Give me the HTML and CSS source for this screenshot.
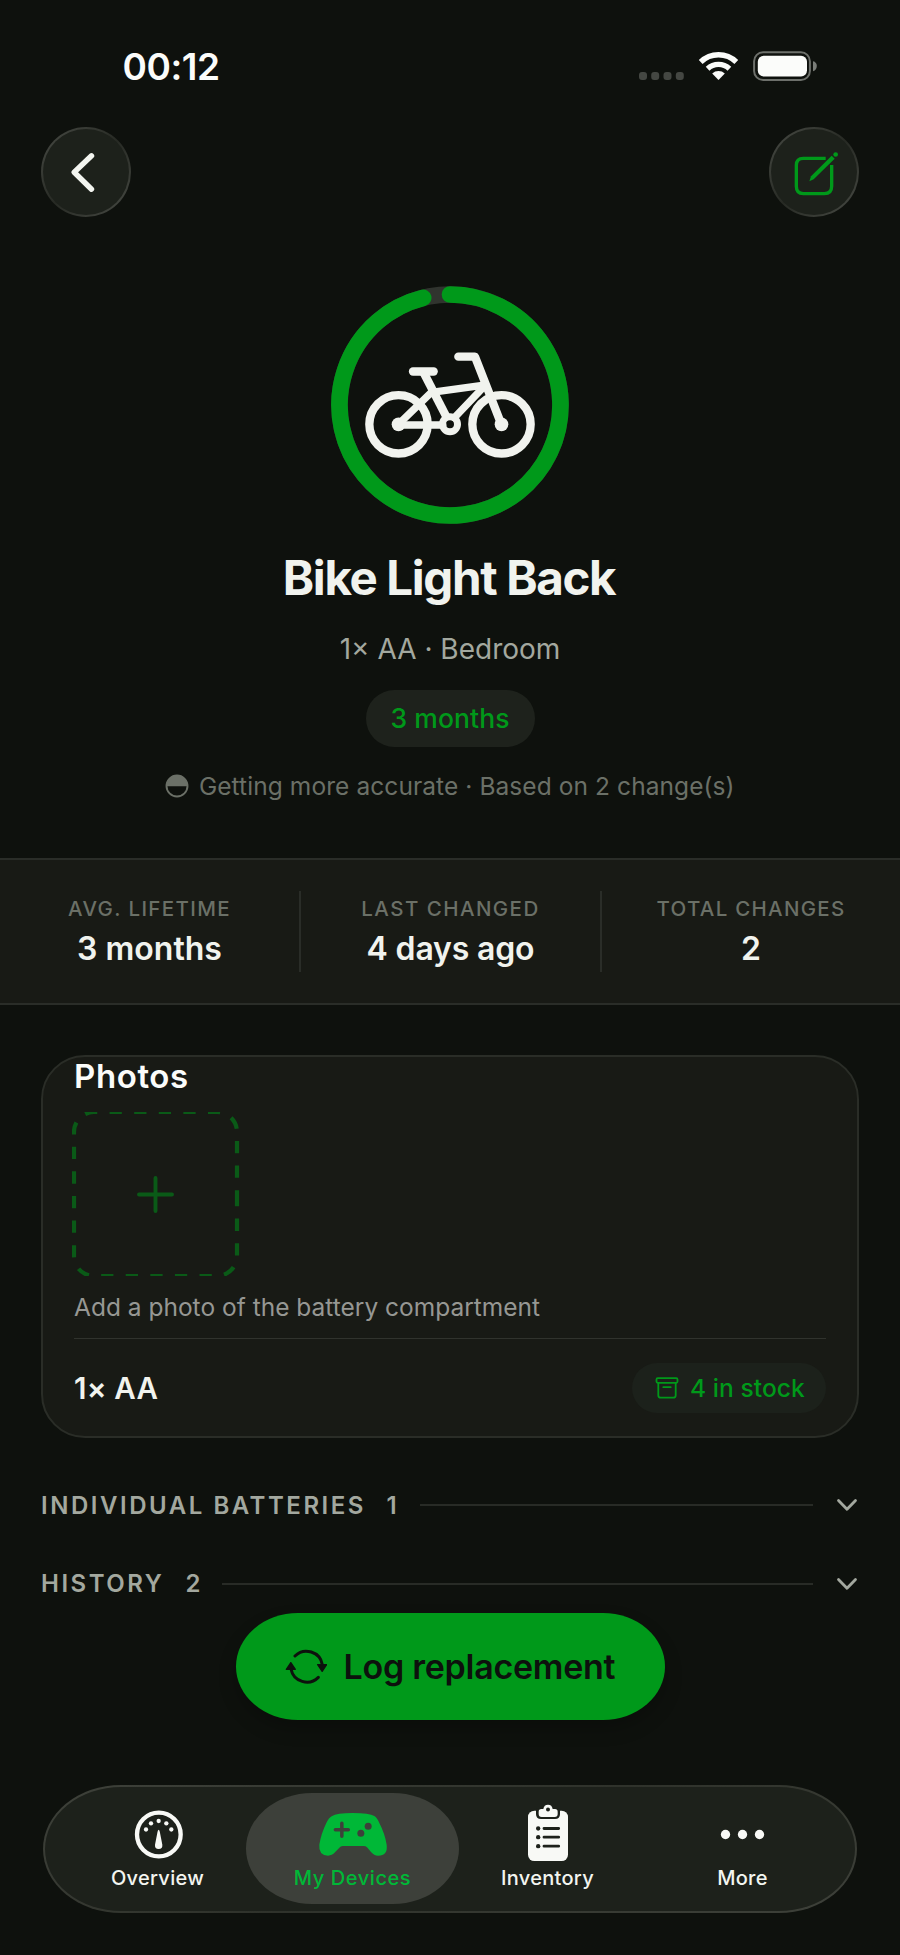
FILE: index.html
```html
<!DOCTYPE html>
<html lang="en">
<head>
<meta charset="utf-8">
<title>Bike Light Back</title>
<link rel="stylesheet" href="styles.css">
</head>
<body>
<div class="screen">
  <header class="status">
    <span class="clock">00:12</span>
    <svg class="status-icons" width="180" height="32" viewBox="0 0 180 32">
      <g fill="#444742"><rect x="0" y="22" width="8" height="8" rx="3"/><rect x="12.2" y="22" width="8" height="8" rx="3"/><rect x="24.5" y="22" width="8" height="8" rx="3"/><rect x="36.8" y="22" width="8" height="8" rx="3"/></g>
      <g fill="none" stroke="#fbfcfa" stroke-width="5.4"><path d="M61.7 12 A25.5 25.5 0 0 1 97.3 12"/><path d="M68.6 18.7 A16 16 0 0 1 90.4 18.7"/></g>
      <path d="M73.2 23.6 A9.2 9.2 0 0 1 85.8 23.6 L79.5 30Z" fill="#fbfcfa"/>
      <rect x="115.1" y="2.2" width="55.8" height="27.8" rx="9" fill="none" stroke="#6d706b" stroke-width="2"/>
      <rect x="118.8" y="5.8" width="49.2" height="20.6" rx="6" fill="#fbfcfa"/>
      <path d="M174 11.2 Q177.8 12 177.8 16.1 Q177.8 20.2 174 21.2Z" fill="#7a7d78"/>
    </svg>
  </header>

  <nav class="toolbar">
    <button class="round" aria-label="Back">
      <svg width="86" height="86" viewBox="2 2 86 86" fill="none" stroke="#f3f5f0" stroke-width="5.4" stroke-linecap="round" stroke-linejoin="round"><path d="M50.5 28.8 L33.2 45.3 L50.5 62.2"/></svg>
    </button>
    <button class="round" aria-label="Edit">
      <svg width="86" height="86" viewBox="6 6 258 258" fill="none" stroke="#00991a"><path d="M170 94 H103 Q82 94 82 115 V178 Q82 200 103 200 H166 Q188 200 188 178 V114" stroke-width="10"/><path d="M188 86 L197 95 L134 157 L121 163 L126 148 Z" fill="#00991a" stroke="none"/><circle cx="200" cy="82.500" r="7" fill="#00991a" stroke="none"/></svg>
    </button>
  </nav>

  <section class="hero">
    <svg class="ring" width="280" height="270" viewBox="0 0 840 810" fill="none">
      <circle cx="420" cy="405" r="331.500" stroke="#30342e" stroke-width="50"/>
      <path d="M420 73.500 A331.500 331.500 0 1 1 339.500 83.400" stroke="#00991a" stroke-width="50" stroke-linecap="round"/>
      <g stroke="#f1f3ee" stroke-width="25" stroke-linecap="round" stroke-linejoin="round">
        <circle cx="265.500" cy="463" r="87.500"/>
        <circle cx="574.500" cy="463" r="87.500"/>
        <circle cx="420" cy="463" r="22.500" stroke-width="21"/>
        <path d="M309 304.500 H371"/>
        <path d="M340 306 L409 440" stroke-linecap="butt"/>
        <path d="M445 260 H495 L574 463"/>
        <path d="M265 463 L364 367 L517 346" stroke-width="22"/>
        <path d="M523 349 L433 443" stroke-width="22"/>
        <path d="M265 465 H398" stroke-width="23"/>
      </g>
      <circle cx="265.500" cy="463" r="20.500" fill="#f1f3ee"/>
      <circle cx="574.500" cy="463" r="20.500" fill="#f1f3ee"/>
    </svg>
    <h1 class="title">Bike Light Back</h1>
    <p class="subtitle">1× AA · Bedroom</p>
    <span class="pill">3 months</span>
    <p class="accuracy">
      <svg width="24" height="24" viewBox="0 0 24 24"><circle cx="12" cy="12" r="10.500" fill="none" stroke="#6b7067" stroke-width="1.900"/><path d="M1 12.300 A11 11 0 0 1 23 12.300Z" fill="#6b7067"/></svg>
      <span>Getting more accurate · Based on 2 change(s)</span>
    </p>
  </section>

  <section class="stats">
    <div class="stat"><span class="stat-label avg">AVG. LIFETIME</span><span class="stat-value">3 months</span></div>
    <div class="stat"><span class="stat-label">LAST CHANGED</span><span class="stat-value ago">4 days ago</span></div>
    <div class="stat"><span class="stat-label total">TOTAL CHANGES</span><span class="stat-value">2</span></div>
  </section>

  <section class="card">
    <h2 class="card-title">Photos</h2>
    <svg class="add" width="168" height="164" viewBox="0 0 168 164" fill="none" stroke="#0a5a17" stroke-width="4.200">
      <path d="M165 82 V144 A20 20 0 0 1 145 164 H22 A20 20 0 0 1 2 144 V20 A20 20 0 0 1 22 0 H145 A20 20 0 0 1 165 20 Z" stroke-dasharray="12.300 12.300"/>
      <path d="M67 82.500 H100 M83.500 66 V99" stroke-width="3.900" stroke-linecap="round"/>
    </svg>
    <p class="hint">Add a photo of the battery compartment</p>
    <div class="battery-row">
      <span class="battery">1× AA</span>
      <span class="stock">
        <svg width="24" height="24" viewBox="0 0 24 24" fill="none" stroke="#00991a" stroke-width="1.800" stroke-linecap="round" stroke-linejoin="round"><rect x="1.500" y="2.200" width="21" height="4.600" rx="1.200"/><path d="M3.300 6.800 V19.200 Q3.300 21.700 5.800 21.700 H18.200 Q20.700 21.700 20.700 19.200 V6.800 M8.300 11.200 H15.700"/></svg>
        <span>4 in stock</span>
      </span>
    </div>
  </section>

  <section class="groups">
    <div class="group"><span class="group-name">INDIVIDUAL BATTERIES</span><span class="count">1</span><i class="rule"></i><svg width="22" height="14" viewBox="0 0 22 14" fill="none" stroke="#a3a89f" stroke-width="2.800" stroke-linecap="round" stroke-linejoin="round"><path d="M2.500 2.500 L11 11.300 L19.500 2.500"/></svg></div>
    <div class="group"><span class="group-name history">HISTORY</span><span class="count two">2</span><i class="rule"></i><svg width="22" height="14" viewBox="0 0 22 14" fill="none" stroke="#a3a89f" stroke-width="2.800" stroke-linecap="round" stroke-linejoin="round"><path d="M2.500 2.500 L11 11.300 L19.500 2.500"/></svg></div>
  </section>

  <button class="log">
    <svg width="42" height="36" viewBox="12 147 126 108"><g fill="none" stroke="#0d110d" stroke-width="9" stroke-linecap="round"><path d="M42 168 A48.500 48.500 0 0 1 124 194"/><path d="M112 232 A48.500 48.500 0 0 1 30 207"/></g><g fill="#0d110d" stroke="#0d110d" stroke-width="4" stroke-linejoin="round"><path d="M110 194 H137 L123.500 214Z"/><path d="M16 208 H43 L29.500 188Z"/></g></svg>
    <span>Log replacement</span>
  </button>

  <nav class="tabs">
    <a class="tab">
      <svg width="70" height="66" viewBox="309 123 210 198" fill="#f8f9f6"><circle cx="416.500" cy="223.500" r="65.500" fill="none" stroke="#f8f9f6" stroke-width="13"/><circle cx="378" cy="208.500" r="6.500"/><circle cx="393" cy="190" r="6.500"/><circle cx="416" cy="183" r="6.500"/><circle cx="439" cy="190" r="6.500"/><circle cx="454" cy="208.500" r="6.500"/><path d="M416 209 Q418.500 210 419.500 216 L427 254 Q428 267 416 267 Q404 267 405 254 L412.500 216 Q413.500 210 416 209Z"/></svg>
      <span class="tab-label">Overview</span>
    </a>
    <a class="tab active">
      <svg width="70" height="66" viewBox="894 123 210 198"><path d="M935 169 Q950 159 998 159 Q1048 159 1063 168 Q1071 173 1078 189 Q1095 222 1100 254 Q1104 287 1074 287 Q1062 287 1053 276 L1041 262 Q1037 258 1031 258 H968 Q962 258 958 263 L945 277 Q936 287 924 287 Q895 285 898 254 Q903 222 919 189 Q927 173 935 169Z" fill="#00b837"/><path d="M946 209.500 H985 M965.500 190 V229" stroke="#3d403a" stroke-width="10.500" stroke-linecap="round"/><circle cx="1044.500" cy="198.500" r="10.500" fill="#3d403a"/><circle cx="1022.500" cy="220" r="10.500" fill="#3d403a"/></svg>
      <span class="tab-label devices">My Devices</span>
    </a>
    <a class="tab">
      <svg width="70" height="66" viewBox="189 123 210 198"><rect x="234" y="152" width="120" height="151" rx="19" fill="#f8f9f6"/><path d="M258 145 H330 V162 Q330 177 315 177 H273 Q258 177 258 162Z" fill="#1d211b"/><path d="M274 147 H280 Q282 134 294 134 Q306 134 308 147 H315 Q323 147 323 155 V162 Q323 171 314 171 H275 Q266 171 266 162 V155 Q266 147 274 147Z" fill="#f8f9f6"/><g fill="#1d211b"><circle cx="294" cy="148.500" r="6"/><circle cx="264.500" cy="205.500" r="6.500"/><circle cx="264.500" cy="231.500" r="6.500"/><circle cx="264.500" cy="258.500" r="6.500"/></g><path d="M282 205.500 H326 M282 231.500 H326 M282 258.500 H326" stroke="#1d211b" stroke-width="8.500" stroke-linecap="round"/></svg>
      <span class="tab-label">Inventory</span>
    </a>
    <a class="tab">
      <svg width="70" height="66" viewBox="774 123 210 198" fill="#f8f9f6"><circle cx="826.500" cy="223.500" r="14"/><circle cx="877.500" cy="223.500" r="14"/><circle cx="928.500" cy="223.500" r="14"/></svg>
      <span class="tab-label">More</span>
    </a>
  </nav>
</div>
</body>
</html>
```
FILE: styles.css
```css
* { box-sizing: border-box; }
body { margin: 0; background: #0e110d; }
h1, h2, p { margin: 0; }
button { padding: 0; border: 0; font: inherit; }
svg { display: block; flex: none; }

.screen {
  width: 900px;
  height: 1955px;
  overflow: hidden;
  display: flex;
  flex-direction: column;
  background: #0e110d;
  color: #f1f3ee;
  font-family: Inter, "Liberation Sans", sans-serif;
  white-space: nowrap;
}

.status {
  height: 127px;
  padding: 6px 81px 0 122.5px;
  display: flex;
  align-items: center;
  justify-content: space-between;
}
.status-icons { margin-bottom: 2px; }
.clock { font-size: 37px; font-weight: 600; line-height: 44px; letter-spacing: -0.44px; color: #fbfcfa; }

.toolbar { display: flex; justify-content: space-between; padding: 0 41px; height: 90px; }
.round {
  width: 90px;
  height: 90px;
  border-radius: 50%;
  border: 2px solid transparent;
  background:
    linear-gradient(#1d211b, #1d211b) padding-box,
    linear-gradient(135deg, #42453f 10%, #272a24 50%, #42453f 90%) border-box;
  display: grid;
  place-items: center;
}

.hero { margin-top: 53px; display: flex; flex-direction: column; align-items: center; }
.title { margin-left: -2px; font-size: 47.5px; font-weight: 700; line-height: 76px; letter-spacing: -1.36px; }
.subtitle { font-size: 28px; line-height: 66px; color: #a3a89f; }
.pill {
  margin-top: 8px;
  width: 169px;
  height: 57px;
  border-radius: 29px;
  background: #1e221c;
  color: #00991a;
  font-size: 26.5px;
  font-weight: 500;
  line-height: 57px;
  letter-spacing: 0.1px;
  text-align: center;
}
.accuracy {
  display: flex;
  align-items: center;
  gap: 9.5px;
  height: 78px;
  font-size: 24.5px;
  letter-spacing: 0.08px;
  color: #6b7067;
}

.stats {
  margin-top: 33px;
  height: 147px;
  padding: 31px 0;
  display: grid;
  grid-template-columns: 299px 301px 300px;
  background: #181a15;
  border: solid #2a2d28;
  border-width: 2px 0;
}
.stat { display: flex; flex-direction: column; align-items: center; padding-top: 2.5px; }
.stat + .stat { border-left: 2px solid #2a2d28; }
.stat-label { font-size: 20.5px; font-weight: 500; line-height: 30px; letter-spacing: 1.45px; color: #6b7067; }
.stat-label.avg { letter-spacing: 1.36px; }
.stat-label.total { letter-spacing: 1.28px; }
.stat-value { margin-top: 3.5px; font-size: 32px; font-weight: 600; line-height: 44px; }
.stat-value.ago { letter-spacing: -0.17px; }

.card {
  margin: 50px 41px 0;
  height: 383px;
  padding: 0 31px 0 29px;
  border: 2px solid #2a2d27;
  border-radius: 44px;
  background: #181a15;
}
.card-title { margin-left: 2px; font-size: 33px; font-weight: 600; line-height: 38px; letter-spacing: 0.6px; color: #fbfcfa; }
.add { margin-top: 17px; overflow: hidden; }
.hint { margin: 11px 0 0 2px; font-size: 24.5px; line-height: 40px; color: #969793; }
.battery-row {
  margin: 11px 0 0 2px;
  height: 98px;
  border-top: 1px solid #30332d;
  display: flex;
  align-items: center;
  justify-content: space-between;
}
.battery { font-size: 29.5px; font-weight: 600; letter-spacing: 0.2px; }
.stock {
  width: 194px;
  height: 50px;
  padding-left: 23px;
  border-radius: 25px;
  background: #1c211b;
  display: flex;
  align-items: center;
  gap: 11px;
  color: #00991a;
  font-size: 24.5px;
  font-weight: 500;
  letter-spacing: 0.08px;
}

.groups { margin-top: 28px; padding: 0 42.5px 0 41px; }
.group { display: flex; align-items: center; height: 78.5px; color: #a3a89f; font-size: 24px; font-weight: 600; }
.group-name { letter-spacing: 2.53px; }
.count { width: 33.5px; margin-left: 20.5px; }
.history + .count { margin-left: 21px; width: 36.5px; }
.rule { flex: 1; height: 2px; margin-right: 22.5px; background: #282b26; }

.log {
  align-self: center;
  margin-top: -10px;
  width: 429px;
  height: 107px;
  flex: none;
  border-radius: 62px / 53.5px;
  background: #00991a;
  box-shadow: 0 9px 18px rgba(0, 0, 0, 0.22);
  display: flex;
  align-items: center;
  padding-left: 49px;
  gap: 17px;
  color: #0d110d;
  font-size: 34px;
  font-weight: 600;
  letter-spacing: -0.26px;
}

.tabs {
  margin: 65px auto 0;
  width: 814px;
  height: 128px;
  flex: none;
  padding: 6px 15px;
  border: 2px solid transparent;
  border-radius: 78px / 64px;
  background:
    linear-gradient(#1d211b, #1d211b) padding-box,
    linear-gradient(160deg, #3e413a 0%, #2f322b 50%, #3e413a 100%) border-box;
  display: grid;
  grid-template-columns: repeat(4, 195px);
}
.tab { display: flex; flex-direction: column; align-items: center; padding-top: 8px; height: 111px; color: #f3f5f0; }
.tab.active { margin: 0 -9px; border-radius: 66px / 55.5px; background: #3d403a; color: #00b837; }
.tab-label { font-size: 20px; font-weight: 500; line-height: 22px; letter-spacing: 0.3px; }
.tab-label.devices { letter-spacing: 0.57px; }
```
